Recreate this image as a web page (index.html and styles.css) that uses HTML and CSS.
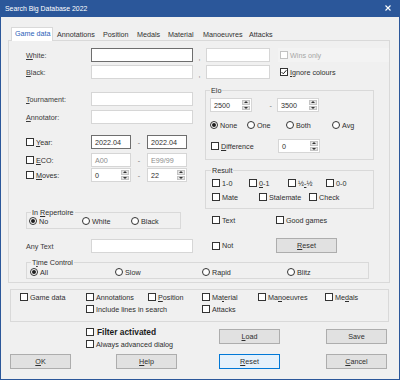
FILE: index.html
```html
<!DOCTYPE html>
<html>
<head>
<meta charset="utf-8">
<link rel="stylesheet" href="styles.css">
</head>
<body>
<div class="window">
  <div class="titlebar">
    <span class="title">Search Big Database 2022</span>
    <svg class="close" width="6" height="6" viewBox="0 0 6 6"><path d="M0.5 0.5L5.5 5.5M5.5 0.5L0.5 5.5" stroke="#fff" stroke-width="1.1"/></svg>
  </div>
  <div class="client">
    <div class="tabs">
      <div class="tab sel w-game">Game data</div>
      <div class="tab w-ann">Annotations</div>
      <div class="tab w-pos">Position</div>
      <div class="tab w-med">Medals</div>
      <div class="tab w-mat">Material</div>
      <div class="tab w-man">Manoeuvres</div>
      <div class="tab w-att">Attacks</div>
    </div>
    <div class="panel">
      <div class="row name-row">
        <span class="lbl"><u>W</u>hite:</span>
        <span class="input dark"></span>
        <span class="comma">,</span>
        <span class="input"></span>
        <span></span>
        <span class="cb disabled shaded"><span class="box"></span>Wins only</span>
      </div>
      <div class="row name-row second">
        <span class="lbl"><u>B</u>lack:</span>
        <span class="input"></span>
        <span class="comma">,</span>
        <span class="input"></span>
        <span></span>
        <span class="cb"><span class="box"><svg width="6" height="6" viewBox="0 0 6 6"><path d="M0.6 3.1L2.3 4.8L5.4 1.2" fill="none" stroke="#222" stroke-width="1"/></svg></span><span><u>I</u>gnore colours</span></span>
      </div>
      <div class="cols">
        <div class="left">
          <div class="row field f-tour">
            <span class="lbl"><u>T</u>ournament:</span>
            <span class="input"></span>
          </div>
          <div class="row field f-ann">
            <span class="lbl"><u>A</u>nnotator:</span>
            <span class="input"></span>
          </div>
          <div class="row range r-year">
            <span class="cb"><span class="box"></span><span><u>Y</u>ear:</span></span>
            <span class="input dark">2022.04</span>
            <span class="dash">-</span>
            <span class="input dark">2022.04</span>
          </div>
          <div class="row range r-eco">
            <span class="cb"><span class="box"></span><span><u>E</u>CO:</span></span>
            <span class="input grey">A00</span>
            <span class="dash">-</span>
            <span class="input grey">E99/99</span>
          </div>
          <div class="row range r-moves">
            <span class="cb"><span class="box"></span><span><u>M</u>oves:</span></span>
            <span class="spin"><span class="val">0</span><span class="arrows"><span class="up"></span><span class="down"></span></span></span>
            <span class="dash">-</span>
            <span class="spin"><span class="val">22</span><span class="arrows"><span class="up"></span><span class="down"></span></span></span>
          </div>
          <div class="group rep">
            <span class="group-title">In <u>R</u>epertoire</span>
            <div class="row radios rep-radios">
              <span class="cb"><span class="radio on"></span>No</span>
              <span class="cb"><span class="radio"></span>White</span>
              <span class="cb"><span class="radio"></span>Black</span>
            </div>
          </div>
          <div class="row field f-any">
            <span class="lbl">Any Text</span>
            <span class="input"></span>
          </div>
        </div>
        <div class="right">
          <div class="group elo">
            <span class="group-title">Elo</span>
            <div class="row elo-spins">
              <span class="spin"><span class="val">2500</span><span class="arrows"><span class="up"></span><span class="down"></span></span></span>
              <span class="dash dash-r">-</span>
              <span class="spin"><span class="val">3500</span><span class="arrows"><span class="up"></span><span class="down"></span></span></span>
            </div>
            <div class="row radios elo-radios">
              <span class="cb"><span class="radio on"></span>None</span>
              <span class="cb"><span class="radio"></span>One</span>
              <span class="cb"><span class="radio"></span>Both</span>
              <span class="cb"><span class="radio"></span>Avg</span>
            </div>
            <div class="row diff-row">
              <span class="cb"><span class="box"></span><span><u>D</u>ifference</span></span>
              <span class="spin"><span class="val">0</span><span class="arrows"><span class="up"></span><span class="down"></span></span></span>
            </div>
          </div>
          <div class="group result">
            <span class="group-title">Result</span>
            <div class="row radios res1">
              <span class="cb"><span class="box"></span>1-0</span>
              <span class="cb"><span class="box"></span><span><u>0</u>-1</span></span>
              <span class="cb"><span class="box"></span><span>½<u>-</u>½</span></span>
              <span class="cb"><span class="box"></span>0-0</span>
            </div>
            <div class="row radios res2">
              <span class="cb"><span class="box"></span>Mate</span>
              <span class="cb"><span class="box"></span>Stalemate</span>
              <span class="cb"><span class="box"></span>Check</span>
            </div>
          </div>
          <div class="row radios text-row">
            <span class="cb"><span class="box"></span>Text</span>
            <span class="cb"><span class="box"></span>Good games</span>
          </div>
          <div class="row not-row">
            <span class="cb"><span class="box"></span>Not</span>
            <span class="btn"><span><u>R</u>eset</span></span>
          </div>
        </div>
      </div>
      <div class="group time">
        <span class="group-title">T<u>i</u>me Control</span>
        <div class="row radios time-radios">
          <span class="cb"><span class="radio on"></span>All</span>
          <span class="cb"><span class="radio"></span>Slow</span>
          <span class="cb"><span class="radio"></span>Rapid</span>
          <span class="cb"><span class="radio"></span>Blitz</span>
        </div>
      </div>
    </div>
    <div class="group opts">
      <div class="row radios opt1">
        <span class="cb"><span class="box"></span>Game data</span>
        <span class="cb"><span class="box"></span>Annotations</span>
        <span class="cb"><span class="box"></span><span><u>P</u>osition</span></span>
        <span class="cb"><span class="box"></span><span>Ma<u>t</u>erial</span></span>
        <span class="cb"><span class="box"></span><span>Ma<u>n</u>oeuvres</span></span>
        <span class="cb"><span class="box"></span><span>Me<u>d</u>als</span></span>
      </div>
      <div class="row radios opt2">
        <span></span>
        <span class="cb"><span class="box"></span>Include lines in search</span>
        <span class="cb"><span class="box"></span>Attacks</span>
      </div>
    </div>
    <div class="actions">
      <div class="checks">
        <span class="cb bold"><span class="box"></span>Filter activated</span>
        <span class="cb"><span class="box"></span>Always advanced dialog</span>
      </div>
      <span class="btn"><span><u>L</u>oad</span></span>
      <span></span>
      <span class="btn">Save</span>
    </div>
    <div class="buttons">
      <span class="btn"><span><u>O</u>K</span></span>
      <span></span>
      <span class="btn"><span><u>H</u>elp</span></span>
      <span></span>
      <span class="btn focus"><span><u>R</u>eset</span></span>
      <span></span>
      <span class="btn"><span><u>C</u>ancel</span></span>
    </div>
  </div>
</div>
</body>
</html>
```

FILE: styles.css
```css
* { box-sizing: border-box; margin: 0; padding: 0; }

body {
  width: 400px;
  height: 380px;
  overflow: hidden;
  font-family: "Liberation Sans", Arial, sans-serif;
  font-size: 7.2px;
  color: #2e2e2e;
  background: #ffffff;
}

u { text-decoration: underline; text-underline-offset: 1px; }

.window {
  width: 400px;
  height: 380px;
  background: #2b579a;
  display: flex;
  flex-direction: column;
}

.titlebar {
  height: 17px;
  flex: none;
  display: flex;
  align-items: center;
  justify-content: space-between;
  padding: 0 9px 1px 5px;
  color: #ffffff;
}

.title { font-size: 6.9px; }

.close { display: block; }

.client {
  flex: 1;
  margin: 0 1px 1px;
  background: #f0f0f0;
  display: flex;
  flex-direction: column;
}

/* tabs */
.tabs {
  display: flex;
  align-items: flex-end;
  height: 13px;
  margin: 10px 0 0 10px;
}

.tab {
  flex: none;
  height: 11px;
  line-height: 11px;
  padding-left: 4px;
  white-space: nowrap;
  color: #303030;
}

.tab.sel {
  height: 14px;
  margin-bottom: -1px;
  padding-left: 3px;
  line-height: 12px;
  background: #ffffff;
  border: 1px solid #d9d9d9;
  border-bottom: none;
  color: #2a62b8;
  position: relative;
  z-index: 1;
}

.w-game { width: 42px; }
.w-ann { width: 46px; }
.w-pos { width: 34px; }
.w-med { width: 31px; }
.w-mat { width: 35px; }
.w-man { width: 46px; }
.w-att { width: 31px; }

.panel {
  margin-left: 7px;
  width: 382px;
  height: 243px;
  flex: none;
  border: 1px solid #d9d9d9;
}

/* generic rows / controls */
.row {
  display: grid;
  align-items: center;
  height: 14px;
}

.radios { height: 10px; }

.lbl { color: #3a3a3a; white-space: nowrap; }

.input {
  height: 14px;
  background: #ffffff;
  border: 1px solid #d6d6d6;
  display: flex;
  align-items: center;
  padding-left: 3px;
  color: #2e2e2e;
}

.input.dark { border-color: #6e6e6e; }
.input.grey { color: #8c8c8c; }

.comma { text-align: center; align-self: end; line-height: 8px; color: #777777; }

.dash { text-align: center; color: #777777; }
.dash-r { text-align: right; padding-right: 5px; }

.cb {
  display: flex;
  align-items: center;
  gap: 2px;
  white-space: nowrap;
  color: #2e2e2e;
}

.cb.disabled { color: #a6a6a6; }
.cb.disabled .box { border-color: #c2c2c2; }

.cb.shaded {
  height: 14px;
  margin-left: -2px;
  padding-left: 2px;
  background: #f3f3f3;
}

.cb.bold { font-weight: bold; font-size: 8.4px; gap: 3px; color: #1a1a1a; }

.box {
  width: 8px;
  height: 8px;
  flex: none;
  border: 1px solid #333333;
  background: #ffffff;
  display: flex;
  align-items: center;
  justify-content: center;
}

.box svg { display: block; }

.radio {
  width: 8px;
  height: 8px;
  flex: none;
  border: 1px solid #333333;
  border-radius: 50%;
  background: #ffffff;
  display: flex;
  align-items: center;
  justify-content: center;
}

.radio.on::after {
  content: "";
  width: 4px;
  height: 4px;
  border-radius: 50%;
  background: #1e1e1e;
}

.spin {
  height: 14px;
  display: flex;
  background: #ffffff;
  border: 1px solid #d6d6d6;
}

.spin .val {
  flex: 1;
  padding-left: 3px;
  display: flex;
  align-items: center;
}

.spin .arrows {
  width: 9px;
  flex: none;
  display: flex;
  flex-direction: column;
  gap: 1px;
  padding: 1px 1px 1px 0;
}

.spin .up, .spin .down {
  flex: 1;
  background: #e3e3e3;
  border: 1px solid #c4c4c4;
  display: flex;
  align-items: center;
  justify-content: center;
}

.spin .up::after {
  content: "";
  border-left: 2px solid transparent;
  border-right: 2px solid transparent;
  border-bottom: 2px solid #333333;
}

.spin .down::after {
  content: "";
  border-left: 2px solid transparent;
  border-right: 2px solid transparent;
  border-top: 2px solid #333333;
}

.btn {
  height: 15px;
  background: #e1e1e1;
  border: 1px solid #adadad;
  display: flex;
  align-items: center;
  justify-content: center;
  color: #2e2e2e;
}

.btn.focus {
  background: #e5f1fb;
  border-color: #0078d7;
}

.group {
  border: 1px solid #d9d9d9;
  position: relative;
}

.group-title {
  position: absolute;
  left: 4px;
  top: -5px;
  padding: 0 1px;
  line-height: 9px;
  background: #f0f0f0;
  color: #2e2e2e;
  white-space: nowrap;
}

/* panel layout */
.name-row {
  grid-template-columns: 65px 102px 13px 64px 10px auto;
  margin: 7px 0 0 17px;
}

.name-row.second { margin-top: 3px; }

.cols {
  display: flex;
  margin-top: 6px;
}

.left {
  width: 196px;
  flex: none;
  padding-left: 17px;
}

.right {
  width: 169px;
  flex: none;
}

.field { grid-template-columns: 65px 102px; }
.f-tour { margin-top: 7px; }
.f-ann { margin-top: 4px; }
.f-any { margin-top: 10px; }

.range { grid-template-columns: 65px 40px 16px 40px; }
.r-year { margin-top: 11px; }
.r-eco { margin-top: 4px; }
.r-moves { margin-top: 1px; }

.rep {
  margin-top: 30px;
  width: 155px;
  height: 17px;
  padding: 3px 0 0 2px;
}

.rep-radios { grid-template-columns: 53px 49px auto; }

.elo {
  margin-top: 5px;
  height: 70px;
  padding: 7px 0 0 4px;
}

.elo .group-title { left: 4px; }

.elo-spins { grid-template-columns: 42px 25px 42px; }

.elo-radios {
  grid-template-columns: 37px 39px 46px auto;
  margin-top: 8px;
}

.diff-row {
  grid-template-columns: 67px 42px;
  margin-top: 9px;
  padding-left: 1px;
}

.result {
  margin-top: 10px;
  height: 39px;
  padding: 7px 0 0 6px;
}

.result .group-title { left: 5px; }

.res1 { grid-template-columns: 37px 39px 38px auto; }

.res2 {
  grid-template-columns: 47px 50px auto;
  margin-top: 4px;
}

.text-row {
  grid-template-columns: 64px auto;
  margin-top: 6px;
  padding-left: 7px;
}

.not-row {
  grid-template-columns: 64px 61px;
  height: 15px;
  margin-top: 13px;
  padding-left: 7px;
}

.time {
  margin: 9px 0 0 17px;
  width: 343px;
  height: 17px;
  padding: 4px 0 0 3px;
}

.time-radios { grid-template-columns: 85px 87px 85px auto; }

/* lower area */
.opts {
  margin: 6px 0 0 9px;
  width: 379px;
  height: 33px;
  flex: none;
  padding: 2px 0 0 9px;
}

.opt1 { grid-template-columns: 66px 62px 54px 56px 67px auto; }

.opt2 {
  grid-template-columns: 66px 116px auto;
  margin-top: 2px;
}

.actions {
  display: grid;
  grid-template-columns: 133px 61px 46px 61px;
  align-items: start;
  margin-top: 5px;
  padding-left: 85px;
}

.actions .btn { margin-top: 2px; }

.checks {
  display: flex;
  flex-direction: column;
  gap: 2px;
}

.checks .cb { height: 10px; }

.buttons {
  display: grid;
  grid-template-columns: 61px 45px 61px 42px 61px 46px 61px;
  margin-top: 5px;
  padding-left: 9px;
}
```
